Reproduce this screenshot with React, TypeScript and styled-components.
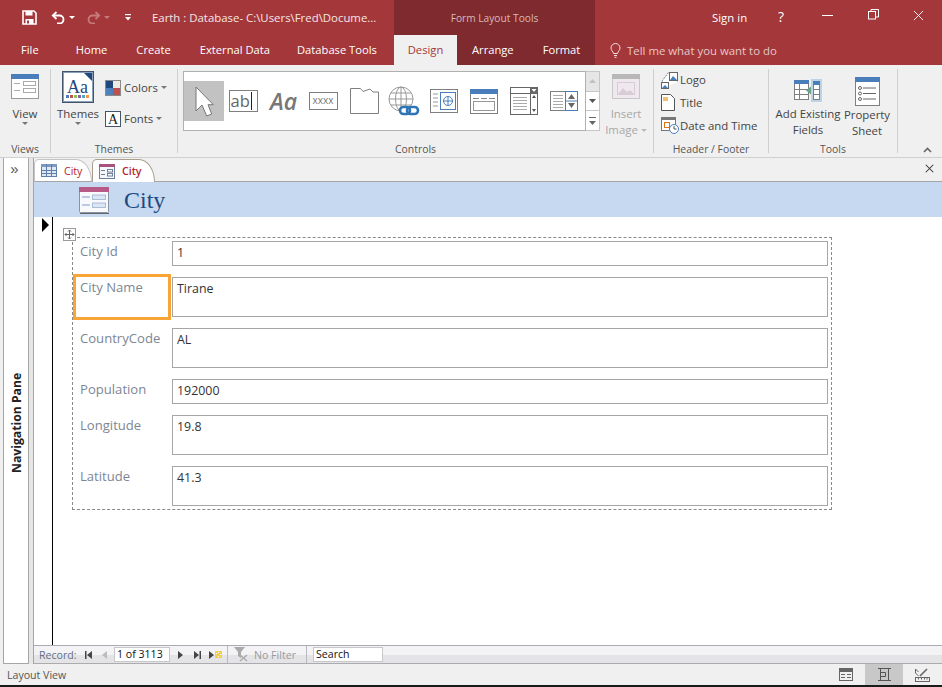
import React from 'react';
import styled, { createGlobalStyle } from 'styled-components';

const ui = `'Open Sans', 'Noto Sans', 'Liberation Sans', sans-serif`;

const Global = createGlobalStyle`
  html, body { margin: 0; padding: 0; background: #f0f0f0; overflow: hidden; }
  * { box-sizing: border-box; }
`;

const Window = styled.div`
  width: 942px;
  height: 687px;
  display: flex;
  flex-direction: column;
  background: #f0f0f0;
  font-family: ${ui};
  font-size: 12px;
  color: #444;
  border-bottom: 2px solid #1a1a1a;
  overflow: hidden;
`;

/* ---------- title + tabs ---------- */
const Header = styled.div`
  display: flex;
  height: 65px;
  flex: none;
  background: #a4373a;
  color: #fff;
`;
const HeaderCol = styled.div<{ $w: number }>`
  width: ${p => p.$w}px;
  flex: none;
  display: flex;
  flex-direction: column;
`;
const ContextCol = styled(HeaderCol)`
  background: #7e2a2e;
`;
const TopRow = styled.div`
  height: 35px;
  display: flex;
  align-items: center;
  position: relative;
`;
const TabRow = styled.div`
  height: 30px;
  display: flex;
  align-items: center;
`;
const QuickBtn = styled.span<{ $ml: number }>`
  margin-left: ${p => p.$ml}px;
  display: flex;
`;
const Mirrored = styled.span`
  display: flex;
  transform: scaleX(-1);
`;
const DocTitle = styled.span`
  margin-left: 21px;
  font-size: 11.4px;
  white-space: nowrap;
  color: #f4e6e6;
`;
const HeadTab = styled.div<{ $ml?: number; $active?: boolean }>`
  margin-left: ${p => p.$ml ?? 0}px;
  height: 30px;
  line-height: 29px;
  font-size: 11.2px;
  white-space: nowrap;
  ${p => (p.$active ? 'background:#f0f0f0;color:#a4373a;width:63px;text-align:center;' : '')}
`;
const ContextTitle = styled.div`
  width: 100%;
  text-align: center;
  font-size: 10.2px;
  color: #d9b9ba;
`;
const SignIn = styled.span`
  position: absolute;
  left: 117px;
  font-size: 11.4px;
`;
const WinBtn = styled.span<{ $x: number; $y?: number }>`
  position: absolute;
  left: ${p => p.$x}px;
  top: ${p => p.$y ?? 8}px;
  display: flex;
  font-size: 14px;
`;
const TellMe = styled.div`
  display: flex;
  align-items: center;
  gap: 6px;
  padding-left: 15px;
  height: 30px;
  font-size: 11.4px;
  color: #e6c8c9;
`;

/* ---------- ribbon ---------- */
const Ribbon = styled.div`
  height: 93px;
  flex: none;
  display: flex;
  background: #f0f0f0;
  border-bottom: 1px solid #d0d0d0;
  position: relative;
`;
const Group = styled.div<{ $w: number }>`
  width: ${p => p.$w}px;
  flex: none;
  display: flex;
  flex-direction: column;
`;
const GroupBody = styled.div`
  flex: 1;
  display: flex;
  min-height: 0;
`;
const GroupLabel = styled.div`
  height: 20px;
  padding-top: 4px;
  text-align: center;
  font-size: 10.4px;
  line-height: 16px;
  color: #555;
`;
const Sep = styled.div`
  width: 1px;
  flex: none;
  margin: 4px 0 4px;
  background: #cfcfcf;
`;
const BigBtn = styled.div<{ $w: number; $ml?: number; $pt: number; $gap?: number; $off?: boolean }>`
  width: ${p => p.$w}px;
  margin-left: ${p => p.$ml ?? 0}px;
  padding-top: ${p => p.$pt}px;
  flex: none;
  display: flex;
  flex-direction: column;
  align-items: center;
  font-size: 11.4px;
  line-height: 16px;
  color: ${p => (p.$off ? '#a8a8a8' : '#444')};
  white-space: nowrap;
  text-align: center;
  svg { margin-bottom: ${p => p.$gap ?? 6}px; flex: none; }
`;
const Caret = styled.i<{ $c?: string; $ml?: number }>`
  display: inline-block;
  width: 0;
  height: 0;
  margin-left: ${p => p.$ml ?? 3}px;
  vertical-align: middle;
  border-left: 3px solid transparent;
  border-right: 3px solid transparent;
  border-top: 3px solid ${p => p.$c ?? '#777'};
`;
const SmallStack = styled.div<{ $ml: number; $pt: number; $gap: number }>`
  margin-left: ${p => p.$ml}px;
  padding-top: ${p => p.$pt}px;
  display: flex;
  flex-direction: column;
  gap: ${p => p.$gap}px;
`;
const SmallBtn = styled.div<{ $gap: number }>`
  display: flex;
  align-items: center;
  gap: ${p => p.$gap}px;
  font-size: 11.4px;
  height: 17px;
  white-space: nowrap;
`;
const Gallery = styled.div`
  margin: 6px 0 0 5px;
  width: 403px;
  height: 60px;
  flex: none;
  background: #fff;
  border: 1px solid #b0b0b0;
  display: flex;
  align-items: center;
`;
const GalleryCell = styled.div<{ $on?: boolean }>`
  width: 40px;
  height: 40px;
  flex: none;
  display: flex;
  align-items: center;
  justify-content: center;
  background: ${p => (p.$on ? '#c2c2c2' : 'transparent')};
`;
const GalleryScroll = styled.div`
  margin-top: 6px;
  width: 14px;
  height: 60px;
  flex: none;
  display: flex;
  flex-direction: column;
  border: 1px solid #c6c6c6;
  border-left: none;
`;
const ScrollCell = styled.div<{ $off?: boolean }>`
  flex: 1;
  display: flex;
  align-items: center;
  justify-content: center;
  background: ${p => (p.$off ? '#e6e6e6' : '#fff')};
  & + & { border-top: 1px solid #c6c6c6; }
`;
const Collapse = styled.div`
  position: absolute;
  left: 923px;
  top: 82px;
  display: flex;
`;

/* ---------- workspace ---------- */
const Workspace = styled.div`
  flex: 1;
  min-height: 0;
  display: flex;
  padding-left: 3px;
`;
const NavPane = styled.div`
  width: 26px;
  flex: none;
  background: #fff;
  border: 1px solid #a6a6a6;
  border-top: none;
  display: flex;
  flex-direction: column;
  align-items: center;
`;
const PaneToggle = styled.div`
  font-family: 'Liberation Sans', sans-serif;
  height: 24px;
  line-height: 22px;
  font-size: 15px;
  color: #555;
  padding-right: 3px;
`;
const PaneLabel = styled.div`
  flex: 1;
  display: flex;
  align-items: center;
  justify-content: center;
  writing-mode: vertical-rl;
  transform: rotate(180deg);
  font-size: 12.2px;
  font-weight: 700;
  color: #222;
`;
const Gutter = styled.div`
  width: 4px;
  flex: none;
  background: #e6e6e6;
`;
const DocArea = styled.div`
  flex: 1;
  min-width: 0;
  display: flex;
  flex-direction: column;
  border-left: 1px solid #a6a6a6;
`;
const TabStrip = styled.div`
  height: 24px;
  flex: none;
  display: flex;
  align-items: flex-end;
  background: #f0f0f0;
  border-bottom: 1px solid #a6a6a6;
  position: relative;
`;
const DocTab = styled.div<{ $active?: boolean }>`
  height: 23px;
  width: ${p => (p.$active ? 63 : 58)}px;
  margin-bottom: -1px;
  flex: none;
  display: flex;
  align-items: center;
  gap: 7px;
  padding-left: 6px;
  background: #fff;
  border: 1px solid ${p => (p.$active ? '#a89f8e' : '#c4c4c4')};
  border-bottom: ${p => (p.$active ? 'none' : '1px solid #a6a6a6')};
  border-radius: 5px 16px 0 0 / 5px 23px 0 0;
  font-size: 10.6px;
  font-weight: ${p => (p.$active ? 600 : 400)};
  color: #b3272d;
`;
const CloseDoc = styled.span`
  position: absolute;
  right: 8px;
  top: 6px;
  display: flex;
`;
const TitleBand = styled.div`
  height: 35px;
  flex: none;
  display: flex;
  align-items: center;
  padding: 2px 0 0 44px;
  gap: 14px;
  background: #c6d9f0;
  font-family: 'Liberation Serif', serif;
  font-size: 24px;
  color: #1f497d;
  svg { margin-top: -2px; }
`;
const FormArea = styled.div`
  flex: 1;
  min-height: 0;
  display: flex;
  background: #fff;
`;
const Selector = styled.div`
  width: 19px;
  flex: none;
  border-right: 1.5px solid #000;
  padding: 1px 0 0 8px;
`;
const Arrow = styled.div`
  width: 0;
  height: 0;
  border-top: 7px solid transparent;
  border-bottom: 7px solid transparent;
  border-left: 7px solid #000;
`;
const Canvas = styled.div`
  flex: 1;
  padding: 20px 0 0 19px;
`;
const FormBox = styled.div`
  position: relative;
  width: 760px;
  padding: 3px 3px 3px 3px;
  display: flex;
  flex-direction: column;
  gap: 11px;
  border: 1px dashed #8a8a8a;
`;
const MoveHandle = styled.span`
  position: absolute;
  left: -10px;
  top: -10px;
  width: 13px;
  height: 13px;
  background: #fff;
  border: 1px solid #9a9a9a;
  display: flex;
`;
const Row = styled.div<{ $tall?: boolean }>`
  display: flex;
  gap: 4px;
  height: ${p => (p.$tall ? 40 : 25)}px;
`;
const Label = styled.div<{ $sel?: boolean }>`
  width: 92px;
  flex: none;
  padding: 1px 0 0 4px;
  font-size: 13.1px;
  line-height: 18px;
  color: #7d8694;
  ${p => (p.$sel ? 'outline: 3px solid #f9a535; outline-offset: 0px;' : '')}
`;
const Field = styled.div`
  flex: 1;
  border: 1px solid #a6a6a6;
  padding: 2px 0 0 4px;
  font-size: 12.4px;
  line-height: 18px;
  color: #333;
`;

/* ---------- record bar + status ---------- */
const RecordBar = styled.div`
  height: 19px;
  flex: none;
  display: flex;
  align-items: center;
  background: linear-gradient(#f3f3f5 0 50%, #e4e4e7 50% 100%);
  border-top: 1px solid #ababb0;
  border-bottom: 1px solid #ababb0;
  font-size: 10.6px;
  color: #5f6f85;
`;
const RecordLabel = styled.span`
  margin-left: 5px;
  width: 43px;
  flex: none;
`;
const NavIcon = styled.span<{ $w: number }>`
  width: ${p => p.$w}px;
  flex: none;
  display: flex;
  justify-content: center;
`;
const RecordInput = styled.div<{ $w: number; $ml?: number }>`
  width: ${p => p.$w}px;
  margin-left: ${p => p.$ml ?? 0}px;
  height: 15px;
  flex: none;
  background: #fff;
  border: 1px solid #c8c8cc;
  font-size: 10.6px;
  line-height: 13px;
  padding-left: 2px;
  color: #111;
`;
const BarSep = styled.span<{ $ml: number }>`
  width: 1px;
  height: 17px;
  margin-left: ${p => p.$ml}px;
  flex: none;
  background: #b9b9bd;
`;
const FilterText = styled.span`
  color: #9a9a9e;
  width: 52px;
  flex: none;
`;
const StatusBar = styled.div`
  height: 21px;
  flex: none;
  display: flex;
  align-items: center;
  background: #f0f0f0;
  font-size: 10.6px;
  color: #555;
  padding-left: 7px;
`;
const StatusText = styled.span`
  flex: 1;
`;
const ViewBtn = styled.span<{ $w: number; $on?: boolean }>`
  width: ${p => p.$w}px;
  height: 21px;
  flex: none;
  display: flex;
  align-items: center;
  justify-content: center;
  background: ${p => (p.$on ? '#c8c8c8' : 'transparent')};
`;

/* ---------- drawings ---------- */
const G = '#7f7f7f';
const B = '#4a7ebb';

const Save = () => (
  <svg width="15" height="15" viewBox="0 0 15 15">
    <path d="M1 1h11l2 2v11H1z" fill="none" stroke="#fff" strokeWidth="1.6" />
    <rect x="3.5" y="1" width="7" height="4.5" fill="#fff" />
    <rect x="3.5" y="9" width="8" height="5" fill="#fff" />
    <rect x="5" y="10.5" width="2" height="3" fill="#a4373a" />
  </svg>
);
const Undo = ({ c }: { c: string }) => (
  <svg width="15" height="13" viewBox="0 0 15 13" fill="none" stroke={c} strokeWidth="1.8">
    <path d="M5.5 1 1.8 4.5 5.5 8" />
    <path d="M2 4.5h6.5a4 4 0 0 1 0 8H6" />
  </svg>
);
const MiniCaret = ({ c }: { c: string }) => <Caret $c={c} $ml={0} />;
const Customize = () => (
  <svg width="6" height="7" viewBox="0 0 6 7" fill="#fff">
    <rect x="0" y="0" width="6" height="1.2" />
    <path d="M0 3h6L3 6.500z" />
  </svg>
);
const Bulb = () => (
  <svg width="11" height="15" viewBox="0 0 11 15" fill="none" stroke="#f3dcdc" strokeWidth="1">
    <path d="M3.5 10.500C3 8 1 7.500 1 5a4.500 4.500 0 0 1 9 0c0 2.500-2 3-2.500 5.500z" />
    <path d="M4 12.500h3M4.500 14.300h2" />
  </svg>
);
const Minimize = () => (
  <svg width="12" height="14" viewBox="0 0 12 14"><rect x="0" y="7" width="11" height="1" fill="#fff" /></svg>
);
const Restore = () => (
  <svg width="11" height="14" viewBox="0 0 11 14" fill="none" stroke="#fff">
    <rect x="0.500" y="3.500" width="7" height="7.500" />
    <path d="M3 3.500V1.500h7.500V9H8" />
  </svg>
);
const CloseX = ({ s, c, w }: { s: number; c: string; w: number }) => (
  <svg width={s} height={s} viewBox="0 0 12 12" stroke={c} strokeWidth={w}>
    <path d="M1 1l10 10M11 1 1 11" />
  </svg>
);
const FormIcon = ({ head = B, line = '#999' }: { head?: string; line?: string }) => (
  <svg width="28" height="25" viewBox="0 0 28 25">
    <rect x="0.500" y="0.500" width="27" height="24" fill="#fff" stroke={line} />
    <rect x="0" y="0" width="28" height="5" fill={head} />
    <g stroke="#aaa" fill="none">
      <path d="M3 9.500h6M3 16.500h6" />
      <rect x="12.500" y="7.500" width="12" height="4" />
      <rect x="12.500" y="14.500" width="12" height="4" />
    </g>
  </svg>
);
const ThemesIcon = () => (
  <svg width="32" height="37" viewBox="0 0 32 37">
    <rect x="0.500" y="0.500" width="31" height="31" fill="#fff" stroke="#44546a" />
    <rect x="1.500" y="1.500" width="29" height="29" fill="#fff" stroke="#8aa0bc" />
    <path d="M22 2h8v8z" fill="#1f497d" />
    <text x="5" y="22" fontFamily="Liberation Serif, serif" fontSize="18" fill="#1f497d">Aa</text>
    {['#4a7ebb', '#c0504d', '#9bbb59', '#8064a2', '#4bacc6', '#f79646'].map((c, i) => (
      <rect key={c} x={4 + i * 4} y="24" width="3" height="3" fill={c} />
    ))}
  </svg>
);
const ColorsIcon = () => (
  <svg width="16" height="16" viewBox="0 0 16 16">
    <rect width="16" height="16" fill="#8a8a8a" />
    <rect x="1" y="1" width="7" height="7" fill="#1f497d" />
    <rect x="8" y="1" width="7" height="7" fill="#eeece1" />
    <rect x="1" y="8" width="7" height="7" fill="#4f81bd" />
    <rect x="8" y="8" width="7" height="7" fill="#c0504d" />
  </svg>
);
const FontsIcon = () => (
  <svg width="16" height="16" viewBox="0 0 16 16">
    <rect x="0.500" y="0.500" width="15" height="15" fill="#fff" stroke="#44546a" />
    <text x="3" y="13" fontFamily="Liberation Serif, serif" fontSize="14" fill="#222">A</text>
  </svg>
);
const Pointer = () => (
  <svg width="19" height="31" viewBox="0 0 19 31">
    <path d="M1 1v24l6-6 4.700 11 5-2L13 18.700h5.300z" fill="#fff" stroke="#777" strokeWidth="1" />
  </svg>
);
const TextBoxIcon = () => (
  <svg width="30" height="22" viewBox="0 0 30 22">
    <rect x="0.500" y="0.500" width="28" height="21" fill="#fff" stroke={G} />
    <text x="1.500" y="16.500" fontFamily="Open Sans, sans-serif" fontSize="16.500" fill="#666">ab</text>
    <rect x="22" y="2" width="1" height="18" fill="#222" />
  </svg>
);
const LabelIcon = () => (
  <svg width="38" height="30" viewBox="0 0 38 30">
    <text x="5" y="24" fontFamily="Open Sans, sans-serif" fontSize="23" fontStyle="italic" fontWeight="600" fill="#777">Aa</text>
  </svg>
);
const XxxxIcon = () => (
  <svg width="30" height="18" viewBox="0 0 30 18">
    <rect x="0.500" y="0.500" width="28" height="17" fill="#fff" stroke={G} />
    <text x="3.500" y="12" fontFamily="Open Sans, sans-serif" fontSize="10" fill="#777">xxxx</text>
  </svg>
);
const FolderIcon = () => (
  <svg width="29" height="26" viewBox="0 0 29 26" fill="#fff" stroke={G}>
    <path d="M0.500 25.500V0.500h10l2.500 3 7-2.500 3 3h5.500v21.500z" />
  </svg>
);
const GlobeIcon = () => (
  <svg width="32" height="31" viewBox="0 0 32 31">
    <g fill="none" stroke="#999">
      <circle cx="13" cy="13" r="12" />
      <ellipse cx="13" cy="13" rx="5.500" ry="12" />
      <path d="M1 13h24M3 7h20M3 19h20M13 1v24" />
    </g>
    <g fill="none" stroke="#2e75b6" strokeWidth="2.600">
      <rect x="12" y="21" width="10" height="7" rx="3.500" fill="#fff" />
      <rect x="19" y="21" width="11" height="7" rx="3.500" />
    </g>
  </svg>
);
const WebIcon = () => (
  <svg width="28" height="24" viewBox="0 0 28 24">
    <rect x="0.500" y="0.500" width="27" height="23" fill="#fff" stroke={G} />
    <path d="M3 5h5M3 9h5M3 13h5M3 17h5" stroke="#999" />
    <rect x="10.500" y="3.500" width="15" height="17" fill="#fff" stroke={B} />
    <circle cx="18" cy="12" r="4.500" fill="none" stroke={B} />
    <path d="M13.500 12h9M18 7.500v9" stroke={B} />
  </svg>
);
const NavIconBig = () => (
  <svg width="28" height="25" viewBox="0 0 28 25">
    <rect x="0.500" y="0.500" width="27" height="24" fill="#fff" stroke={G} />
    <rect width="28" height="5" fill={B} />
    <path d="M3 9.500h6M11 9.500h6M19 9.500h6" stroke="#888" />
    <rect x="3.500" y="12.500" width="21" height="9" fill="none" stroke="#999" />
  </svg>
);
const ComboIcon = () => (
  <svg width="28" height="28" viewBox="0 0 28 28">
    <rect x="0.500" y="0.500" width="27" height="27" fill="#fff" stroke="#666" />
    <rect x="20" y="0" width="8" height="7" fill="#666" />
    <path d="M21.500 2h5l-2.500 3z" fill="#fff" />
    <path d="M0.500 6.500h20M20.500 0v28" stroke="#666" />
    <path d="M22 11h4l-2-3zM22 22h4l-2 3z" fill="#555" />
    <path d="M3 10.500h14M3 13.500h14M3 16.500h14M3 19.500h14M3 22.500h14" stroke="#aaa" />
  </svg>
);
const SpinIcon = () => (
  <svg width="28" height="20" viewBox="0 0 28 20">
    <rect x="0.500" y="0.500" width="27" height="19" fill="#fff" stroke={G} />
    <path d="M3 4.500h10M3 7.500h10M3 10.500h10M3 13.500h10M3 16.500h10" stroke="#aaa" />
    <rect x="15.500" y="0.500" width="12" height="19" fill="#fff" stroke={B} />
    <path d="M15.500 10h12" stroke={B} />
    <path d="M18 8l3.500-5L25 8zM18 12l3.500 5 3.500-5z" fill="#666" />
  </svg>
);
const ImageIcon = () => (
  <svg width="28" height="25" viewBox="0 0 28 25">
    <rect width="28" height="25" fill="#efe8ee" />
    <rect x="0.500" y="0.500" width="27" height="24" fill="none" stroke="#c8c8c8" />
    <rect width="28" height="5" fill="#b8b8b8" />
    <rect x="5.500" y="8.500" width="17" height="12" fill="none" stroke="#d8ccd6" />
    <path d="M6 20l5-6 4 4 3-2 4 4z" fill="#d8ccd6" />
  </svg>
);
const LogoIcon = () => (
  <svg width="18" height="18" viewBox="0 0 18 18">
    <path d="M1.500 16.500v-7l6-8h9v10" fill="#fff" stroke="#777" strokeDasharray="2 1" />
    <rect x="8.500" y="1.500" width="8" height="8" fill="#fff" stroke="#666" />
    <path d="M9 9l3-4 4 4z" fill={B} />
    <rect x="0.500" y="11.500" width="7" height="6" fill="#fff" stroke="#666" />
    <path d="M1 17l3-3 3 3z" fill={B} />
  </svg>
);
const TitleIcon = () => (
  <svg width="14" height="17" viewBox="0 0 14 17">
    <path d="M0.500 0.500h9l4 4v12H0.500z" fill="#fff" stroke="#555" />
    <rect x="2" y="3" width="5" height="4" fill="#f0c070" />
  </svg>
);
const DateIcon = () => (
  <svg width="18" height="17" viewBox="0 0 18 17">
    <rect x="0.500" y="0.500" width="14" height="13" fill="#fff" stroke="#777" />
    <rect x="0" y="0" width="15" height="3" fill="#777" />
    <rect x="3.500" y="5.500" width="5" height="5" fill="none" stroke="#d9731c" />
    <circle cx="13" cy="12" r="4.500" fill="#fff" stroke={B} />
    <path d="M13 9v3h2.500" fill="none" stroke="#555" />
  </svg>
);
const AddFieldsIcon = () => (
  <svg width="29" height="24" viewBox="0 0 29 24">
    <rect x="0.500" y="1.500" width="14" height="19" fill="#fff" stroke={G} />
    <rect x="0" y="1" width="15" height="4" fill={B} />
    <path d="M0 10.500h15M0 15.500h15M5.500 5v16" stroke={G} />
    <rect x="17" y="0" width="11" height="23" fill="#bcd3e8" />
    <rect x="19.500" y="2.500" width="6" height="18" fill="#fff" stroke={G} />
    <rect x="19" y="2" width="7" height="4" fill={B} />
    <path d="M19.500 10.500h6M19.500 15.500h6" stroke={G} />
    <path d="M12 11.500l5-4v8z" fill="#6aa58a" />
  </svg>
);
const SheetIcon = () => (
  <svg width="25" height="29" viewBox="0 0 25 29">
    <rect x="0.500" y="0.500" width="24" height="28" fill="#fff" stroke={G} />
    <rect width="25" height="5" fill={B} />
    <g fill="none" stroke="#666">
      <circle cx="5" cy="11" r="1.500" />
      <circle cx="5" cy="16.500" r="1.500" />
      <circle cx="5" cy="22" r="1.500" />
      <path d="M8 11h13M8 16.500h13M8 22h13" />
    </g>
  </svg>
);
const ScrollTri = ({ up, c }: { up?: boolean; c: string }) => (
  <svg width="7" height="4" viewBox="0 0 7 4" fill={c}>
    <path d={up ? 'M0 4h7L3.500 0z' : 'M0 0h7L3.500 4z'} />
  </svg>
);
const ScrollMore = () => (
  <svg width="7" height="8" viewBox="0 0 7 8" fill="#666">
    <rect width="7" height="1" />
    <path d="M0 4h7L3.500 8z" />
  </svg>
);
const Chevron = () => (
  <svg width="9" height="6" viewBox="0 0 9 6" fill="none" stroke="#666" strokeWidth="1.600">
    <path d="M1 5l3.500-3.500L8 5" />
  </svg>
);
const TableTab = () => (
  <svg width="16" height="13" viewBox="0 0 16 13">
    <rect x="0.500" y="0.500" width="15" height="12" fill="#dfe8f5" stroke="#5f7fa8" />
    <rect x="0" y="0" width="16" height="3" fill="#7d99c0" />
    <path d="M5.500 0v13M10.500 0v13M0 6.500h16M0 9.500h16" stroke="#5f7fa8" />
  </svg>
);
const FormTab = () => (
  <svg width="16" height="15" viewBox="0 0 16 15">
    <rect x="0.500" y="0.500" width="15" height="14" fill="#f5f7fb" stroke="#6d7f99" />
    <rect width="16" height="3" fill="#a8517f" />
    <path d="M2 6.500h4M2 10.500h4" stroke="#6d7f99" />
    <rect x="8.500" y="5.500" width="5" height="2.500" fill="#fff" stroke="#6d7f99" />
    <rect x="8.500" y="9.500" width="5" height="2.500" fill="#fff" stroke="#6d7f99" />
  </svg>
);
const FormHeaderIcon = () => (
  <svg width="32" height="28" viewBox="0 0 32 28">
    <rect x="1.500" y="1.500" width="29" height="25" rx="1" fill="#f7f9fd" stroke="#8a93a3" />
    <rect x="1" y="1" width="30" height="5" fill="#b85a88" />
    <path d="M4 11h8M4 19h8" stroke="#a9bcd8" strokeWidth="1.500" />
    <rect x="14.500" y="9" width="13" height="4.500" fill="#dbe5f3" stroke="#a9bcd8" />
    <rect x="14.500" y="17" width="13" height="4.500" fill="#dbe5f3" stroke="#a9bcd8" />
    <path d="M2 27.500h29" stroke="#666" />
  </svg>
);
const MoveIcon = () => (
  <svg width="11" height="11" viewBox="0 0 11 11" stroke="#666" fill="none">
    <path d="M5.500 1v9M1 5.500h9M4 2.500 5.500 1 7 2.500M4 8.500 5.500 10 7 8.500M2.500 4 1 5.500 2.500 7M8.500 4 10 5.500 8.500 7" />
  </svg>
);
const First = () => (
  <svg width="7" height="8" viewBox="0 0 7 8" fill="#444"><rect width="1.500" height="8" /><path d="M7 0v8L2 4z" /></svg>
);
const Prev = () => (
  <svg width="5" height="8" viewBox="0 0 5 8" fill="#bbb"><path d="M5 0v8L0 4z" /></svg>
);
const Next = () => (
  <svg width="5" height="8" viewBox="0 0 5 8" fill="#444"><path d="M0 0v8l5-4z" /></svg>
);
const Last = () => (
  <svg width="7" height="8" viewBox="0 0 7 8" fill="#444"><path d="M0 0v8l5-4z" /><rect x="5.500" width="1.500" height="8" /></svg>
);
const NewRec = () => (
  <svg width="13" height="8" viewBox="0 0 13 8">
    <path d="M0 0v8l5-4z" fill="#444" />
    <rect x="6" y="0" width="7" height="7" fill="#f3cf4f" />
    <path d="M7 2h1v1H7zM9 1h1v1H9zM11 3h1v1h-1zM9 5h1v1H9z" fill="#fff" />
  </svg>
);
const FilterIcon = () => (
  <svg width="15" height="15" viewBox="0 0 15 15">
    <path d="M0 0h11L7 5v6L4 9V5z" fill="#a9a9a9" />
    <path d="M6 8l7 6M13 8l-7 6" stroke="#a9a9a9" strokeWidth="1.300" />
  </svg>
);
const DatasheetSmall = () => (
  <svg width="14" height="13" viewBox="0 0 14 13">
    <rect x="0.500" y="0.500" width="13" height="12" fill="none" stroke="#666" />
    <rect width="14" height="4" fill="#666" />
    <path d="M2 6.500h4M2 9.500h4M8 6.500h4M8 9.500h4" stroke="#666" />
  </svg>
);
const LayoutSmall = () => (
  <svg width="13" height="13" viewBox="0 0 13 13" fill="none" stroke="#555">
    <rect x="2.500" y="0.500" width="8" height="12" />
    <path d="M0 0.500h13M0 12.500h13M2.500 4.500h5M2.500 8.500h5M7.500 4.500v4" />
  </svg>
);
const DesignSmall = () => (
  <svg width="15" height="14" viewBox="0 0 15 14" fill="none" stroke="#666">
    <path d="M0.500 1v4l3 3M0.500 1l3 3" />
    <path d="M5 8l7-7" strokeWidth="1.600" />
    <rect x="0.500" y="9.500" width="14" height="4" />
    <path d="M3.500 9.500v2M6.500 9.500v2M9.500 9.500v2M12 9.500v2" />
  </svg>
);

type FieldRow = { label: string; value: string; tall?: boolean; sel?: boolean };
const rows: FieldRow[] = [
  { label: 'City Id', value: '1' },
  { label: 'City Name', value: 'Tirane', tall: true, sel: true },
  { label: 'CountryCode', value: 'AL', tall: true },
  { label: 'Population', value: '192000' },
  { label: 'Longitude', value: '19.8', tall: true },
  { label: 'Latitude', value: '41.3', tall: true },
];

const App = () => (
  <Window>
    <Global />
    <Header>
      <HeaderCol $w={394}>
        <TopRow>
          <QuickBtn $ml={22}><Save /></QuickBtn>
          <QuickBtn $ml={14}><Undo c="#fff" /></QuickBtn>
          <QuickBtn $ml={3}><MiniCaret c="#fff" /></QuickBtn>
          <QuickBtn $ml={11}><Mirrored><Undo c="#c77a7c" /></Mirrored></QuickBtn>
          <QuickBtn $ml={3}><MiniCaret c="#c77a7c" /></QuickBtn>
          <QuickBtn $ml={15}><Customize /></QuickBtn>
          <DocTitle>Earth : Database- C:\Users\Fred\Docume...</DocTitle>
        </TopRow>
        <TabRow>
          <HeadTab $ml={21}>File</HeadTab>
          <HeadTab $ml={37}>Home</HeadTab>
          <HeadTab $ml={29}>Create</HeadTab>
          <HeadTab $ml={29}>External Data</HeadTab>
          <HeadTab $ml={27}>Database Tools</HeadTab>
        </TabRow>
      </HeaderCol>
      <ContextCol $w={201}>
        <TopRow><ContextTitle>Form Layout Tools</ContextTitle></TopRow>
        <TabRow>
          <HeadTab $active>Design</HeadTab>
          <HeadTab $ml={15}>Arrange</HeadTab>
          <HeadTab $ml={29}>Format</HeadTab>
        </TabRow>
      </ContextCol>
      <HeaderCol $w={347}>
        <TopRow>
          <SignIn>Sign in</SignIn>
          <WinBtn $x={183} $y={7}>?</WinBtn>
          <WinBtn $x={227}><Minimize /></WinBtn>
          <WinBtn $x={273}><Restore /></WinBtn>
          <WinBtn $x={318} $y={10}><CloseX s={11} c="#fff" w={1} /></WinBtn>
        </TopRow>
        <TellMe><Bulb />Tell me what you want to do</TellMe>
      </HeaderCol>
    </Header>

    <Ribbon>
      <Group $w={50}>
        <GroupBody>
          <BigBtn $w={50} $pt={9} $gap={7}>
            <FormIcon />
            <span>View</span>
            <Caret $ml={0} />
          </BigBtn>
        </GroupBody>
        <GroupLabel>Views</GroupLabel>
      </Group>
      <Sep />
      <Group $w={126}>
        <GroupBody>
          <BigBtn $w={54} $pt={6} $gap={-2}>
            <ThemesIcon />
            <span>Themes</span>
            <Caret $ml={0} />
          </BigBtn>
          <SmallStack $ml={0} $pt={14} $gap={14}>
            <SmallBtn $gap={3}><ColorsIcon />Colors<Caret $ml={0} /></SmallBtn>
            <SmallBtn $gap={3}><FontsIcon />Fonts<Caret $ml={0} /></SmallBtn>
          </SmallStack>
        </GroupBody>
        <GroupLabel>Themes</GroupLabel>
      </Group>
      <Sep />
      <Group $w={475}>
        <GroupBody>
          <Gallery>
            <GalleryCell $on><Pointer /></GalleryCell>
            <GalleryCell><TextBoxIcon /></GalleryCell>
            <GalleryCell><LabelIcon /></GalleryCell>
            <GalleryCell><XxxxIcon /></GalleryCell>
            <GalleryCell><FolderIcon /></GalleryCell>
            <GalleryCell><GlobeIcon /></GalleryCell>
            <GalleryCell><WebIcon /></GalleryCell>
            <GalleryCell><NavIconBig /></GalleryCell>
            <GalleryCell><ComboIcon /></GalleryCell>
            <GalleryCell><SpinIcon /></GalleryCell>
          </Gallery>
          <GalleryScroll>
            <ScrollCell $off><ScrollTri up c="#c0c0c0" /></ScrollCell>
            <ScrollCell><ScrollTri c="#555" /></ScrollCell>
            <ScrollCell><ScrollMore /></ScrollCell>
          </GalleryScroll>
          <BigBtn $w={52} $pt={9} $gap={7} $off>
            <ImageIcon />
            <span>Insert</span>
            <span>Image <Caret $c="#bbb" $ml={0} /></span>
          </BigBtn>
        </GroupBody>
        <GroupLabel>Controls</GroupLabel>
      </Group>
      <Sep />
      <Group $w={114}>
        <GroupBody>
          <SmallStack $ml={7} $pt={6} $gap={6}>
            <SmallBtn $gap={1}><LogoIcon />Logo</SmallBtn>
            <SmallBtn $gap={5}><TitleIcon />Title</SmallBtn>
            <SmallBtn $gap={1}><DateIcon />Date and Time</SmallBtn>
          </SmallStack>
        </GroupBody>
        <GroupLabel>Header / Footer</GroupLabel>
      </Group>
      <Sep />
      <Group $w={128}>
        <GroupBody>
          <BigBtn $w={70} $ml={4} $pt={14} $gap={3}>
            <AddFieldsIcon />
            <span>Add Existing</span>
            <span>Fields</span>
          </BigBtn>
          <BigBtn $w={48} $pt={12} $gap={1}>
            <SheetIcon />
            <span>Property</span>
            <span>Sheet</span>
          </BigBtn>
        </GroupBody>
        <GroupLabel>Tools</GroupLabel>
      </Group>
      <Sep />
      <Collapse><Chevron /></Collapse>
    </Ribbon>

    <Workspace>
      <NavPane>
        <PaneToggle>»</PaneToggle>
        <PaneLabel>Navigation Pane</PaneLabel>
      </NavPane>
      <Gutter />
      <DocArea>
        <TabStrip>
          <DocTab><TableTab />City</DocTab>
          <DocTab $active><FormTab />City</DocTab>
          <CloseDoc><CloseX s={9} c="#333" w={1.4} /></CloseDoc>
        </TabStrip>
        <TitleBand><FormHeaderIcon />City</TitleBand>
        <FormArea>
          <Selector><Arrow /></Selector>
          <Canvas>
            <FormBox>
              <MoveHandle><MoveIcon /></MoveHandle>
              {rows.map(r => (
                <Row key={r.label} $tall={r.tall}>
                  <Label $sel={r.sel}>{r.label}</Label>
                  <Field>{r.value}</Field>
                </Row>
              ))}
            </FormBox>
          </Canvas>
        </FormArea>
        <RecordBar>
          <RecordLabel>Record:</RecordLabel>
          <NavIcon $w={12}><First /></NavIcon>
          <NavIcon $w={20}><Prev /></NavIcon>
          <RecordInput $w={56}>1 of 3113</RecordInput>
          <NavIcon $w={20}><Next /></NavIcon>
          <NavIcon $w={15}><Last /></NavIcon>
          <NavIcon $w={21}><NewRec /></NavIcon>
          <BarSep $ml={1} />
          <NavIcon $w={26}><FilterIcon /></NavIcon>
          <FilterText>No Filter</FilterText>
          <BarSep $ml={0} />
          <RecordInput $w={70} $ml={6}>Search</RecordInput>
        </RecordBar>
      </DocArea>
    </Workspace>

    <StatusBar>
      <StatusText>Layout View</StatusText>
      <ViewBtn $w={38}><DatasheetSmall /></ViewBtn>
      <ViewBtn $w={38} $on><LayoutSmall /></ViewBtn>
      <ViewBtn $w={39}><DesignSmall /></ViewBtn>
    </StatusBar>
  </Window>
);

export default App;
